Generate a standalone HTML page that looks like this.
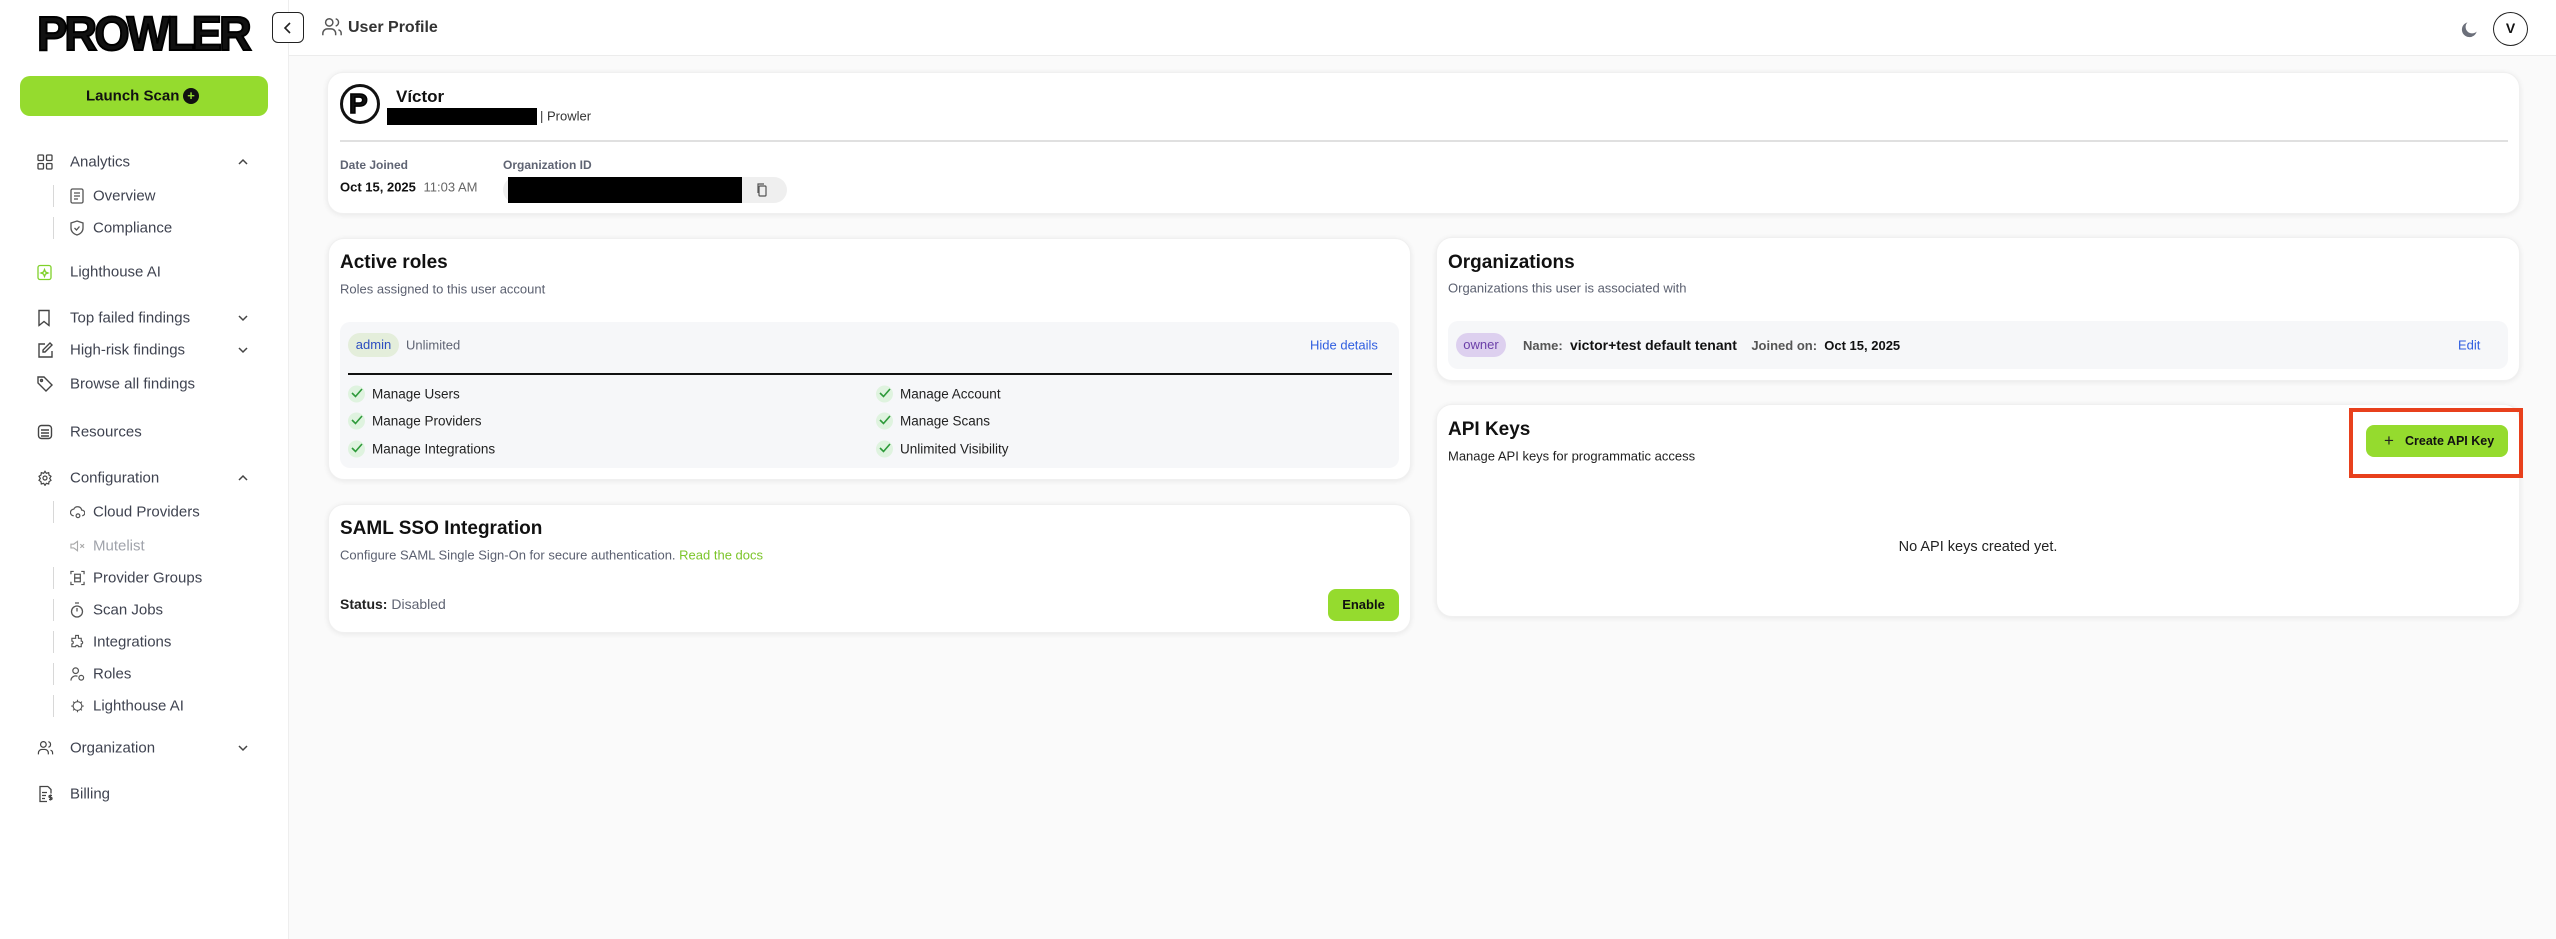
<!DOCTYPE html>
<html><head><meta charset="utf-8"><style>
*{box-sizing:border-box;margin:0;padding:0}
body{width:2556px;height:939px;position:relative;background:#fafafa;font-family:"Liberation Sans",sans-serif;color:#111;overflow:hidden}
.a{position:absolute;white-space:nowrap}
.side{position:absolute;left:0;top:0;width:289px;height:939px;background:#fff;border-right:1px solid #eee}
.top{position:absolute;left:289px;top:0;right:0;height:56px;background:#fff;border-bottom:1px solid #ececec}
.nav{font-size:15px;color:#3f4350;transform:translateY(-50%)}
.ico{position:absolute;transform:translateY(-50%)}
.vl{position:absolute;left:53px;width:1px;height:22px;background:#d8d8d8;transform:translateY(-50%)}
.card{position:absolute;background:#fff;border-radius:16px;box-shadow:0 1px 6px rgba(0,0,0,.08);border:1px solid #f0f0f0}
.t{font-size:19px;font-weight:bold;transform:translateY(-50%)}
.s{font-size:13px;color:#5b6070;transform:translateY(-50%)}
.m{transform:translateY(-50%)}
.chk{position:absolute;width:17px;height:17px;border-radius:50%;background:#dff3df;transform:translateY(-50%)}
</style></head><body>
<div class="side"></div>
<div class="top"></div>

<!-- logo -->
<div class="a" style="left:37px;top:11px;font-size:48px;font-weight:900;letter-spacing:-3px;line-height:48px;-webkit-text-stroke:2px #000;transform-origin:left top;transform:scaleX(0.945)">PROWLER</div>
<div class="a" style="left:272px;top:12px;width:32px;height:31px;border:1.5px solid #222;border-radius:6px;background:#fff"></div>
<svg class="a" style="left:282px;top:21px" width="12" height="14" viewBox="0 0 12 14"><path d="M8 2L3 7l5 5" stroke="#222" stroke-width="1.6" fill="none"/></svg>
<svg class="a" style="left:321px;top:16px" width="22" height="22" viewBox="0 0 24 24" fill="none" stroke="#555" stroke-width="1.6"><circle cx="9" cy="7" r="4"/><path d="M2 21v-2a5 5 0 0 1 5-5h4a5 5 0 0 1 5 5v2M16 3.1a4 4 0 0 1 0 7.8M22 21v-2a4 4 0 0 0-3-3.9"/></svg>
<div class="a m" style="left:348px;top:28px;font-size:16px;font-weight:bold;color:#333">User Profile</div>
<svg class="a" style="left:2460px;top:19px" width="20" height="20" viewBox="0 0 24 24"><path d="M20 15A9 9 0 1 1 9 4a7 7 0 0 0 11 11z" fill="#6b6f7a"/></svg>
<div class="a" style="left:2493px;top:12px;width:35px;height:34px;border:1.5px solid #222;border-radius:50%;text-align:center;line-height:31px;font-size:14px;font-weight:bold">V</div>

<!-- launch scan -->
<div class="a" style="left:20px;top:76px;width:248px;height:40px;background:#95db2e;border-radius:10px"></div>
<div class="a m" style="left:86px;top:96px;font-size:15px;font-weight:bold;color:#111">Launch Scan</div>
<div class="a" style="left:183px;top:88px;width:16px;height:16px;border-radius:50%;background:#111;color:#95db2e;font-size:13px;line-height:16px;text-align:center;font-weight:bold">+</div>

<!-- nav -->
<svg class="ico" style="left:37px;top:162px" width="16" height="16" viewBox="0 0 16 16" fill="none" stroke="#444" stroke-width="1.3"><rect x="1" y="1" width="5.5" height="5.5" rx="1"/><rect x="9.5" y="1" width="5.5" height="5.5" rx="1"/><rect x="1" y="9.5" width="5.5" height="5.5" rx="1"/><rect x="9.5" y="9.5" width="5.5" height="5.5" rx="1"/></svg>
<div class="a nav" style="left:70px;top:162px">Analytics</div>
<svg class="ico" style="left:237px;top:162px" width="12" height="8" viewBox="0 0 12 8"><path d="M2 6l4-4 4 4" stroke="#444" stroke-width="1.5" fill="none"/></svg>
<div class="vl" style="top:196px"></div>
<svg class="ico" style="left:70px;top:196px" width="14" height="16" viewBox="0 0 14 16" fill="none" stroke="#555" stroke-width="1.3"><rect x="1" y="1" width="12" height="14" rx="1.5"/><path d="M4 5h6M4 8h6M4 11h4"/></svg>
<div class="a nav" style="left:93px;top:196px">Overview</div>
<div class="vl" style="top:228px"></div>
<svg class="ico" style="left:70px;top:228px" width="14" height="16" viewBox="0 0 14 16" fill="none" stroke="#555" stroke-width="1.3"><path d="M7 1l6 2v5c0 4-3 6-6 7C4 14 1 12 1 8V3z"/><path d="M4.5 8l2 2 3-3.5"/></svg>
<div class="a nav" style="left:93px;top:228px">Compliance</div>
<svg class="ico" style="left:37px;top:272px" width="16" height="17" viewBox="0 0 16 17" fill="none" stroke="#7fd12a" stroke-width="1.3"><rect x="1" y="2" width="13" height="14" rx="2"/><path d="M7.5 6l1 2.5 2.5 1-2.5 1-1 2.5-1-2.5-2.5-1 2.5-1z"/></svg>
<div class="a nav" style="left:70px;top:272px">Lighthouse AI</div>
<svg class="ico" style="left:37px;top:318px" width="14" height="17" viewBox="0 0 14 17" fill="none" stroke="#444" stroke-width="1.4"><path d="M2 1h10v15l-5-4-5 4z"/></svg>
<div class="a nav" style="left:70px;top:318px">Top failed findings</div>
<svg class="ico" style="left:237px;top:318px" width="12" height="8" viewBox="0 0 12 8"><path d="M2 2l4 4 4-4" stroke="#444" stroke-width="1.5" fill="none"/></svg>
<svg class="ico" style="left:37px;top:350px" width="16" height="16" viewBox="0 0 16 16" fill="none" stroke="#444" stroke-width="1.4"><path d="M8 2H2v13h13V9"/><path d="M13 1l2 2-7 7H6V8z"/></svg>
<div class="a nav" style="left:70px;top:350px">High-risk findings</div>
<svg class="ico" style="left:237px;top:350px" width="12" height="8" viewBox="0 0 12 8"><path d="M2 2l4 4 4-4" stroke="#444" stroke-width="1.5" fill="none"/></svg>
<svg class="ico" style="left:37px;top:384px" width="16" height="16" viewBox="0 0 16 16" fill="none" stroke="#444" stroke-width="1.4"><path d="M1 1h6l8 8-6 6-8-8z"/><circle cx="4.5" cy="4.5" r="1"/></svg>
<div class="a nav" style="left:70px;top:384px">Browse all findings</div>
<svg class="ico" style="left:37px;top:432px" width="16" height="16" viewBox="0 0 16 16" fill="none" stroke="#444" stroke-width="1.4"><rect x="1.5" y="1.5" width="13" height="13" rx="3"/><path d="M4 6h8M4 9h8M4 12h8"/></svg>
<div class="a nav" style="left:70px;top:432px">Resources</div>
<svg class="ico" style="left:37px;top:478px" width="16" height="16" viewBox="0 0 24 24" fill="none" stroke="#444" stroke-width="1.8"><circle cx="12" cy="12" r="3"/><path d="M12 2l2 3 3.5-1 .5 3.5 3 2-2 3 2 3-3 2-.5 3.5-3.5-1-2 3-2-3-3.5 1-.5-3.5-3-2 2-3-2-3 3-2L6.5 4 10 5z"/></svg>
<div class="a nav" style="left:70px;top:478px">Configuration</div>
<svg class="ico" style="left:237px;top:478px" width="12" height="8" viewBox="0 0 12 8"><path d="M2 6l4-4 4 4" stroke="#444" stroke-width="1.5" fill="none"/></svg>
<div class="vl" style="top:512px"></div>
<svg class="ico" style="left:70px;top:512px" width="15" height="15" viewBox="0 0 16 16" fill="none" stroke="#555" stroke-width="1.3"><path d="M4 12a3.5 3.5 0 0 1 0-7 4.5 4.5 0 0 1 8.5 1A3 3 0 0 1 13 12"/><circle cx="8.5" cy="12" r="2"/></svg>
<div class="a nav" style="left:93px;top:512px">Cloud Providers</div>
<svg class="ico" style="left:70px;top:546px" width="15" height="14" viewBox="0 0 16 14" fill="none" stroke="#aaa" stroke-width="1.2"><path d="M1 5h3l4-3v10l-4-3H1z"/><path d="M11 5l4 4M15 5l-4 4"/></svg>
<div class="a nav" style="left:93px;top:546px;color:#a0a3ab">Mutelist</div>
<div class="vl" style="top:578px"></div>
<svg class="ico" style="left:70px;top:578px" width="15" height="15" viewBox="0 0 16 16" fill="none" stroke="#555" stroke-width="1.3"><path d="M1 4V1h3M12 1h3v3M15 12v3h-3M4 15H1v-3"/><rect x="5" y="4" width="6" height="4"/><rect x="5" y="8" width="6" height="4"/></svg>
<div class="a nav" style="left:93px;top:578px">Provider Groups</div>
<div class="vl" style="top:610px"></div>
<svg class="ico" style="left:70px;top:610px" width="14" height="16" viewBox="0 0 14 16" fill="none" stroke="#555" stroke-width="1.3"><circle cx="7" cy="9.5" r="5.5"/><path d="M5 1h4M7 9.5V6"/></svg>
<div class="a nav" style="left:93px;top:610px">Scan Jobs</div>
<div class="vl" style="top:642px"></div>
<svg class="ico" style="left:70px;top:642px" width="15" height="15" viewBox="0 0 16 16" fill="none" stroke="#555" stroke-width="1.2"><path d="M6 1h3v3h3v3a1.5 1.5 0 1 1 0 3v3H9a1.5 1.5 0 1 0-3 0H2v-3a1.5 1.5 0 1 0 0-3V4h4z"/></svg>
<div class="a nav" style="left:93px;top:642px">Integrations</div>
<div class="vl" style="top:674px"></div>
<svg class="ico" style="left:70px;top:674px" width="15" height="15" viewBox="0 0 16 16" fill="none" stroke="#555" stroke-width="1.3"><circle cx="6" cy="4.5" r="3"/><path d="M1 15a5 5 0 0 1 7-4.5"/><circle cx="12" cy="12" r="2.5"/></svg>
<div class="a nav" style="left:93px;top:674px">Roles</div>
<div class="vl" style="top:706px"></div>
<svg class="ico" style="left:70px;top:706px" width="15" height="15" viewBox="0 0 24 24" fill="none" stroke="#555" stroke-width="1.8"><circle cx="12" cy="12" r="7"/><path d="M12 2v3M12 19v3M2 12h3M19 12h3M5 5l2 2M17 17l2 2M5 19l2-2M17 7l2-2"/></svg>
<div class="a nav" style="left:93px;top:706px">Lighthouse AI</div>
<svg class="ico" style="left:37px;top:748px" width="17" height="17" viewBox="0 0 24 24" fill="none" stroke="#444" stroke-width="1.7"><circle cx="9" cy="7" r="4"/><path d="M2 21v-2a5 5 0 0 1 5-5h4a5 5 0 0 1 5 5v2M16 3.1a4 4 0 0 1 0 7.8M22 21v-2a4 4 0 0 0-3-3.9"/></svg>
<div class="a nav" style="left:70px;top:748px">Organization</div>
<svg class="ico" style="left:237px;top:748px" width="12" height="8" viewBox="0 0 12 8"><path d="M2 2l4 4 4-4" stroke="#444" stroke-width="1.5" fill="none"/></svg>
<svg class="ico" style="left:38px;top:794px" width="16" height="17" viewBox="0 0 16 17" fill="none" stroke="#444" stroke-width="1.3"><path d="M10 1H2v15h7M10 1l3 3v4"/><path d="M4 7h5M4 10h4M4 13h3"/><path d="M14 10h-2a1 1 0 0 0 0 2h1a1 1 0 0 1 0 2h-2M12.5 9v6"/></svg>
<div class="a nav" style="left:70px;top:794px">Billing</div>

<!-- profile card -->
<div class="card" style="left:327px;top:72px;width:2193px;height:142px"></div>
<div class="a" style="left:340px;top:84px;width:40px;height:40px;border:3px solid #111;border-radius:50%"></div>
<div class="a" style="left:349px;top:88px;font-size:28px;font-weight:900;line-height:32px;-webkit-text-stroke:1.5px #000">P</div>
<div class="a m" style="left:396px;top:97px;font-size:17px;font-weight:bold">Víctor</div>
<div class="a" style="left:387px;top:108px;width:150px;height:17px;background:#000"></div>
<div class="a m" style="left:540px;top:116px;font-size:13px;color:#333">| Prowler</div>
<div class="a" style="left:340px;top:140px;width:2168px;height:1.5px;background:#e0e0e0"></div>
<div class="a m" style="left:340px;top:165px;font-size:12px;font-weight:bold;color:#5f6473">Date Joined</div>
<div class="a m" style="left:503px;top:165px;font-size:12px;font-weight:bold;color:#5f6473">Organization ID</div>
<div class="a m" style="left:340px;top:187px;font-size:13px;font-weight:bold">Oct 15, 2025 <span style="font-weight:normal;color:#666;margin-left:4px">11:03 AM</span></div>
<div class="a" style="left:503px;top:177px;width:284px;height:26px;background:#efefef;border-radius:13px"></div>
<div class="a" style="left:508px;top:177px;width:234px;height:26px;background:#000"></div>
<svg class="a" style="left:756px;top:183px" width="12" height="14" viewBox="0 0 12 14" fill="none" stroke="#555" stroke-width="1.2"><rect x="3" y="3" width="7" height="10" rx="1"/><path d="M2 10V1h6"/></svg>

<!-- active roles -->
<div class="card" style="left:328px;top:238px;width:1083px;height:242px"></div>
<div class="a t" style="left:340px;top:263px">Active roles</div>
<div class="a s" style="left:340px;top:289px">Roles assigned to this user account</div>
<div class="a" style="left:340px;top:322px;width:1059px;height:146px;background:#f6f7f9;border-radius:10px"></div>
<div class="a" style="left:348px;top:333px;width:51px;height:24px;background:#e4eedb;border-radius:12px;text-align:center;line-height:24px;font-size:13px;color:#2c4ec0">admin</div>
<div class="a m" style="left:406px;top:345px;font-size:13px;color:#5f6473">Unlimited</div>
<div class="a m" style="left:1310px;top:345px;font-size:13px;color:#2f5ee0">Hide details</div>
<div class="a" style="left:348px;top:373px;width:1044px;height:2px;background:#111"></div>

<div class="chk" style="left:348px;top:394px"></div><svg class="a" style="left:351px;top:388px" width="12" height="10" viewBox="0 0 12 10"><path d="M1 5l3.5 3.5L11 1" stroke="#2e9a3a" stroke-width="1.6" fill="none"/></svg>
<div class="a m" style="left:372px;top:394px;font-size:13.5px;color:#222">Manage Users</div>
<div class="chk" style="left:348px;top:421px"></div><svg class="a" style="left:351px;top:415px" width="12" height="10" viewBox="0 0 12 10"><path d="M1 5l3.5 3.5L11 1" stroke="#2e9a3a" stroke-width="1.6" fill="none"/></svg>
<div class="a m" style="left:372px;top:421px;font-size:13.5px;color:#222">Manage Providers</div>
<div class="chk" style="left:348px;top:449px"></div><svg class="a" style="left:351px;top:443px" width="12" height="10" viewBox="0 0 12 10"><path d="M1 5l3.5 3.5L11 1" stroke="#2e9a3a" stroke-width="1.6" fill="none"/></svg>
<div class="a m" style="left:372px;top:449px;font-size:13.5px;color:#222">Manage Integrations</div>
<div class="chk" style="left:876px;top:394px"></div><svg class="a" style="left:879px;top:388px" width="12" height="10" viewBox="0 0 12 10"><path d="M1 5l3.5 3.5L11 1" stroke="#2e9a3a" stroke-width="1.6" fill="none"/></svg>
<div class="a m" style="left:900px;top:394px;font-size:13.5px;color:#222">Manage Account</div>
<div class="chk" style="left:876px;top:421px"></div><svg class="a" style="left:879px;top:415px" width="12" height="10" viewBox="0 0 12 10"><path d="M1 5l3.5 3.5L11 1" stroke="#2e9a3a" stroke-width="1.6" fill="none"/></svg>
<div class="a m" style="left:900px;top:421px;font-size:13.5px;color:#222">Manage Scans</div>
<div class="chk" style="left:876px;top:449px"></div><svg class="a" style="left:879px;top:443px" width="12" height="10" viewBox="0 0 12 10"><path d="M1 5l3.5 3.5L11 1" stroke="#2e9a3a" stroke-width="1.6" fill="none"/></svg>
<div class="a m" style="left:900px;top:449px;font-size:13.5px;color:#222">Unlimited Visibility</div>

<!-- SAML -->
<div class="card" style="left:328px;top:504px;width:1083px;height:129px"></div>
<div class="a t" style="left:340px;top:529px">SAML SSO Integration</div>
<div class="a s" style="left:340px;top:555px">Configure SAML Single Sign-On for secure authentication. <span style="color:#7cc52a">Read the docs</span></div>
<div class="a m" style="left:340px;top:604px;font-size:14px;color:#5f6473"><b style="color:#222">Status:</b> Disabled</div>
<div class="a" style="left:1328px;top:589px;width:71px;height:32px;background:#95db2e;border-radius:8px;text-align:center;line-height:32px;font-size:13px;font-weight:bold">Enable</div>

<!-- Organizations -->
<div class="card" style="left:1436px;top:237px;width:1084px;height:144px"></div>
<div class="a t" style="left:1448px;top:263px">Organizations</div>
<div class="a s" style="left:1448px;top:288px">Organizations this user is associated with</div>
<div class="a" style="left:1448px;top:321px;width:1060px;height:48px;background:#f6f7f9;border-radius:10px"></div>
<div class="a" style="left:1456px;top:333px;width:50px;height:24px;background:#ddd0ef;border-radius:12px;text-align:center;line-height:24px;font-size:13px;color:#6b3fa8">owner</div>
<div class="a m" style="left:1523px;top:345px;font-size:13px;color:#444"><b style="color:#555">Name:</b>&nbsp; <b style="color:#111;font-size:14px">victor+test default tenant</b> &nbsp;&nbsp; <b style="color:#555">Joined on:</b>&nbsp; <b style="color:#111">Oct 15, 2025</b></div>
<div class="a m" style="left:2458px;top:345px;font-size:13px;color:#2f5ee0">Edit</div>

<!-- API keys -->
<div class="card" style="left:1436px;top:404px;width:1084px;height:213px"></div>
<div class="a t" style="left:1448px;top:430px">API Keys</div>
<div class="a s" style="left:1448px;top:456px;color:#222">Manage API keys for programmatic access</div>
<div class="a m" style="left:1978px;top:547px;font-size:14.5px;color:#222;transform:translate(-50%,-50%)">No API keys created yet.</div>
<div class="a" style="left:2349px;top:408px;width:174px;height:70px;border:4px solid #e8401c"></div>
<div class="a" style="left:2366px;top:425px;width:142px;height:32px;background:#95db2e;border-radius:8px"></div>
<div class="a m" style="left:2384px;top:441px;font-size:17px;color:#222">+</div>
<div class="a m" style="left:2405px;top:441px;font-size:12.5px;font-weight:bold;color:#111">Create API Key</div>
</body></html>
